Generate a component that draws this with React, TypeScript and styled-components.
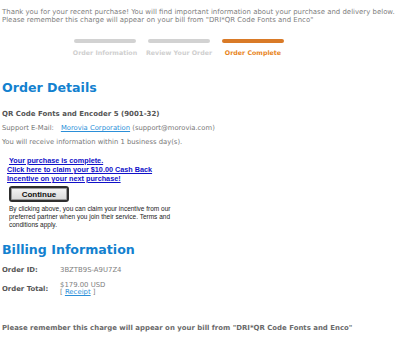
import * as React from "react";
import styled, { createGlobalStyle } from "styled-components";

const GlobalStyle = createGlobalStyle`
  html, body {
    margin: 0;
    background: #ffffff;
  }
  body {
    padding: 8px 2px 0;
    font-family: "DejaVu Sans", Verdana, sans-serif;
  }
`;

const steps = [
  { label: "Order Information", done: false },
  { label: "Review Your Order", done: false },
  { label: "Order Complete", done: true },
];

export default function App() {
  return (
    <>
      <GlobalStyle />
      <Page>
        <Intro>
          Thank you for your recent purchase! You will find important information about your
          purchase and delivery below.
          <br />
          Please remember this charge will appear on your bill from "DRI*QR Code Fonts and Enco"
        </Intro>

        <Progress>
          {steps.map((s) => (
            <Step key={s.label}>
              <Bar active={s.done} />
              <StepLabel active={s.done}>{s.label}</StepLabel>
            </Step>
          ))}
        </Progress>

        <Heading>Order Details</Heading>
        <Product>QR Code Fonts and Encoder 5 (9001-32)</Product>
        <Line>
          Support E-Mail:<Gap />
          <Link href="#">Morovia Corporation</Link> (support@morovia.com)
        </Line>
        <Line>You will receive information within 1 business day(s).</Line>

        <Incentive>
          <OfferLink href="#">
            <Indent>Your purchase is complete.</Indent>
            <br />
            Click here to claim your $10.00 Cash Back
            <br />
            Incentive on your next purchase!
          </OfferLink>
          <ContinueButton type="button">Continue</ContinueButton>
          <Fine>
            By clicking above, you can claim your incentive from our preferred partner when you
            join their service. Terms and conditions apply.
          </Fine>
        </Incentive>

        <BillingHeading>Billing Information</BillingHeading>
        <Billing>
          <Label>Order ID:</Label>
          <Value>3BZTB9S-A9U7Z4</Value>
          <Label>Order Total:</Label>
          <Value>
            $179.00 USD
            <br />[ <Link href="#">Receipt</Link> ]
          </Value>
        </Billing>

        <Reminder>
          Please remember this charge will appear on your bill from "DRI*QR Code Fonts and Enco"
        </Reminder>
      </Page>
    </>
  );
}

const Page = styled.div`
  width: 396px;
  color: #777777;
`;

const Intro = styled.p`
  margin: 0;
  font-size: 6.95px;
  line-height: 8px;
  color: #808080;
  white-space: nowrap;
`;

const Progress = styled.div`
  display: flex;
  gap: 12px;
  margin: 15px 0 0 72px;
`;

const Step = styled.div`
  width: 62px;
  display: flex;
  flex-direction: column;
  align-items: center;
`;

const Bar = styled.div<{ active?: boolean }>`
  width: 62px;
  height: 4px;
  border-radius: 2px;
  background: ${(p) => (p.active ? "#d97a27" : "#d2d2d2")};
`;

const StepLabel = styled.div<{ active?: boolean }>`
  margin-top: 6px;
  font-size: 6.3px;
  font-weight: bold;
  white-space: nowrap;
  color: ${(p) => (p.active ? "#e8851c" : "#cfcfcf")};
`;

const Heading = styled.h2`
  margin: 24px 0 0;
  font-size: 12.6px;
  line-height: 16px;
  font-weight: bold;
  color: #1381cf;
`;

const Product = styled.div`
  margin-top: 14px;
  font-size: 7px;
  font-weight: bold;
  color: #555555;
  line-height: 8px;
`;

const Line = styled.div`
  margin-top: 6px;
  font-size: 6.8px;
  line-height: 8px;
  color: #777777;
  white-space: nowrap;
`;

const Gap = styled.span`
  display: inline-block;
  width: 7px;
`;

const Link = styled.a`
  color: #2b8fd8;
  text-decoration: underline;
`;

const Incentive = styled.div`
  margin-top: 10px;
  padding-left: 5px;
  font-family: "Liberation Sans", Arial, sans-serif;
`;

const OfferLink = styled.a`
  display: block;
  font-size: 7.25px;
  line-height: 9px;
  font-weight: bold;
  color: #1010c8;
  text-decoration: underline;
`;

const Indent = styled.span`
  padding-left: 2px;
`;

const ContinueButton = styled.button`
  display: block;
  margin: 3px 0 0 2px;
  width: 60px;
  height: 16px;
  padding: 0;
  border: 2px solid #2e2e2e;
  border-radius: 3px;
  box-shadow: inset 0 0 0 1px #9a9a9a;
  background: linear-gradient(#f4f4f4, #d8d8d8);
  font-family: "Liberation Sans", Arial, sans-serif;
  font-size: 8px;
  font-weight: bold;
  color: #111111;
`;

const Fine = styled.p`
  margin: 3px 0 0 2px;
  width: 172px;
  font-size: 6.5px;
  line-height: 7.8px;
  color: #222222;
`;

const BillingHeading = styled(Heading)`
  margin-top: 14px;
`;

const Billing = styled.div`
  display: grid;
  grid-template-columns: 58px auto;
  row-gap: 8px;
  margin-top: 9px;
  font-size: 6.9px;
  line-height: 7px;
  align-items: center;
`;

const Label = styled.div`
  font-weight: bold;
  color: #555555;
`;

const Value = styled.div`
  color: #808080;
`;

const Reminder = styled.p`
  margin: 28px 0 0;
  font-size: 6.95px;
  font-weight: bold;
  color: #6a6a6a;
  white-space: nowrap;
`;
